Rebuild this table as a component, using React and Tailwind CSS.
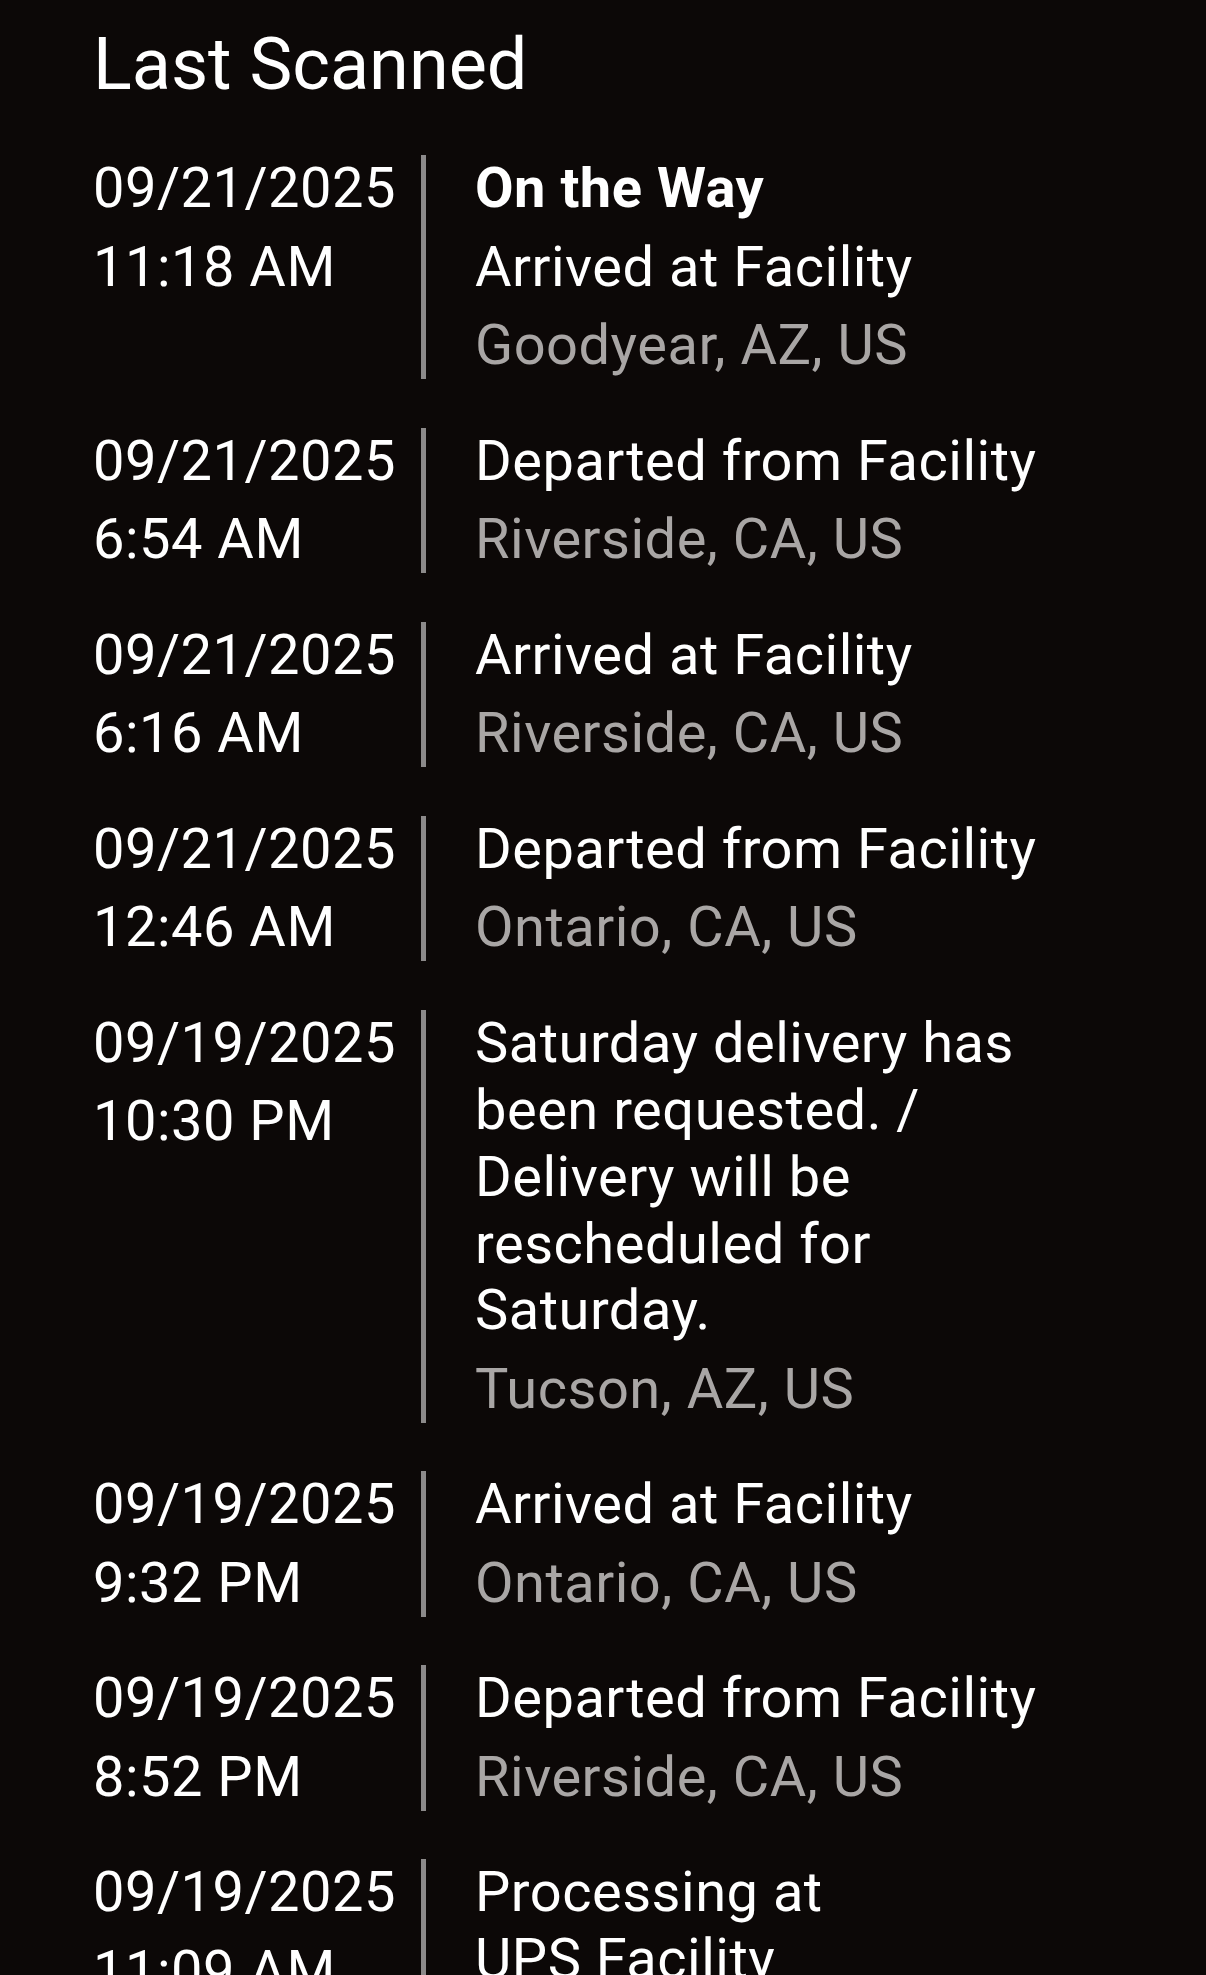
const scans = [
  {
    date: "09/21/2025",
    time: "11:18 AM",
    status: "On the Way",
    detail: "Arrived at Facility",
    place: "Goodyear, AZ, US",
  },
  { date: "09/21/2025", time: "6:54 AM", detail: "Departed from Facility", place: "Riverside, CA, US" },
  { date: "09/21/2025", time: "6:16 AM", detail: "Arrived at Facility", place: "Riverside, CA, US" },
  { date: "09/21/2025", time: "12:46 AM", detail: "Departed from Facility", place: "Ontario, CA, US" },
  {
    date: "09/19/2025",
    time: "10:30 PM",
    detail: "Saturday delivery has been requested. / Delivery will be rescheduled for Saturday.",
    place: "Tucson, AZ, US",
  },
  { date: "09/19/2025", time: "9:32 PM", detail: "Arrived at Facility", place: "Ontario, CA, US" },
  { date: "09/19/2025", time: "8:52 PM", detail: "Departed from Facility", place: "Riverside, CA, US" },
  { date: "09/19/2025", time: "11:09 AM", detail: "Processing at UPS\u00a0Facility", place: "Riverside, CA, US" },
];

const ScanRow = ({ scan }) => (
  <div className="flex">
    <div className="flex w-[328px] shrink-0 flex-col gap-[11.5px]">
      <p>{scan.date}</p>
      <p>{scan.time}</p>
    </div>
    <div className="w-[5px] shrink-0 bg-[#8c8a8a]" />
    <div className="flex w-[620px] flex-col gap-[11.5px] pl-[49px]">
      {scan.status && <p className="font-bold">{scan.status}</p>}
      <p>{scan.detail}</p>
      <p className="text-[#a9a6a5]">{scan.place}</p>
    </div>
  </div>
);

export default function App() {
  return (
    <div className="h-[1975px] overflow-hidden bg-[#0c0807] pl-[93px] pt-[22px] text-white" style={{ fontFamily: "Roboto, 'Noto Sans', sans-serif" }}>
      <h1 className="mb-[47px] text-[72px] leading-[1.2] font-normal">Last Scanned</h1>
      <div className="flex flex-col gap-[48.7px] text-[56px] leading-[66.9px] tracking-[0.5px]">
        {scans.map((scan, i) => (
          <ScanRow key={i} scan={scan} />
        ))}
      </div>
    </div>
  );
}
